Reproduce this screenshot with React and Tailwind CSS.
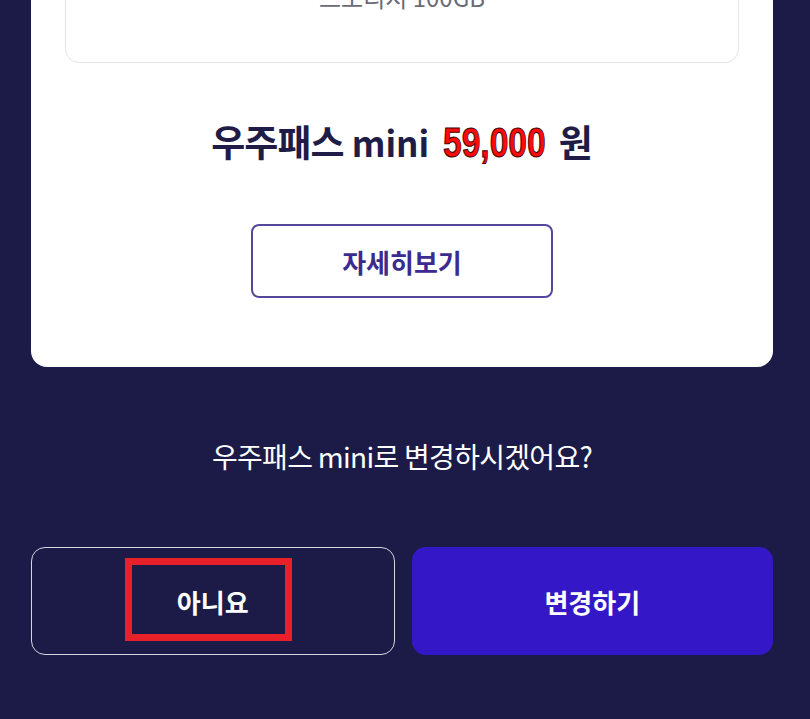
export default function App() {
  const kr = { fontFamily: '"Noto Sans CJK KR", "Noto Sans", sans-serif' };

  return (
    <div
      className="w-[810px] h-[719px] overflow-hidden bg-[#1c1b48] flex flex-col items-start"
      style={kr}
    >
      {/* Plan card */}
      <div className="-mt-[62px] ml-[31px] w-[742px] bg-white rounded-b-2xl px-[34px] pb-[69px] flex flex-col items-center">
        {/* Feature box */}
        <div className="w-full border border-[#e4e4ea] rounded-b-[14px] pt-[44px] pb-[51px] flex justify-center">
          <p className="text-[24px] leading-7 text-[#6b6b76]">스토리지 100GB</p>
        </div>

        {/* Price */}
        <div className="mt-[56px] flex items-baseline text-[#1f1d47] font-bold leading-[44px]">
          <span className="text-[37px] tracking-tight">우주패스</span>
          <span className="ml-[8px] text-[35px]">mini</span>
          <span
            className="ml-[14px] inline-block origin-left scale-x-[0.78] -mr-[26px] text-[43px] text-[#ff0a0a] [-webkit-text-stroke:1px_#3a0000]"
            style={{ fontFamily: '"Liberation Sans", Arial, sans-serif' }}
          >
            59,000
          </span>
          <span className="ml-[10px] text-[37px]">원</span>
        </div>

        {/* Detail button */}
        <button className="mt-[60px] w-[302px] h-[74px] border-2 border-[#56479c] rounded-lg flex items-center justify-center text-[26px] font-bold text-[#3b2b8f]">
          자세히보기
        </button>
      </div>

      {/* Question */}
      <p className="self-center -ml-[6px] mt-[73px] text-[28px] leading-8 text-white tracking-tight">
        우주패스 mini로 변경하시겠어요?
      </p>

      {/* Actions */}
      <div className="mt-[75px] ml-[31px] w-[742px] flex gap-[17px]">
        <button className="relative flex-1 h-[108px] border border-[#d6d6e0] rounded-[14px] flex items-center justify-center text-[26px] font-bold text-white">
          아니요
          <span className="absolute left-[93px] top-[10px] w-[167px] h-[83px] border-[7px] border-[#e8202a]" />
        </button>
        <button className="flex-1 h-[108px] bg-[#3418c8] rounded-[14px] flex items-center justify-center text-[26px] font-bold text-white">
          변경하기
        </button>
      </div>
    </div>
  );
}
